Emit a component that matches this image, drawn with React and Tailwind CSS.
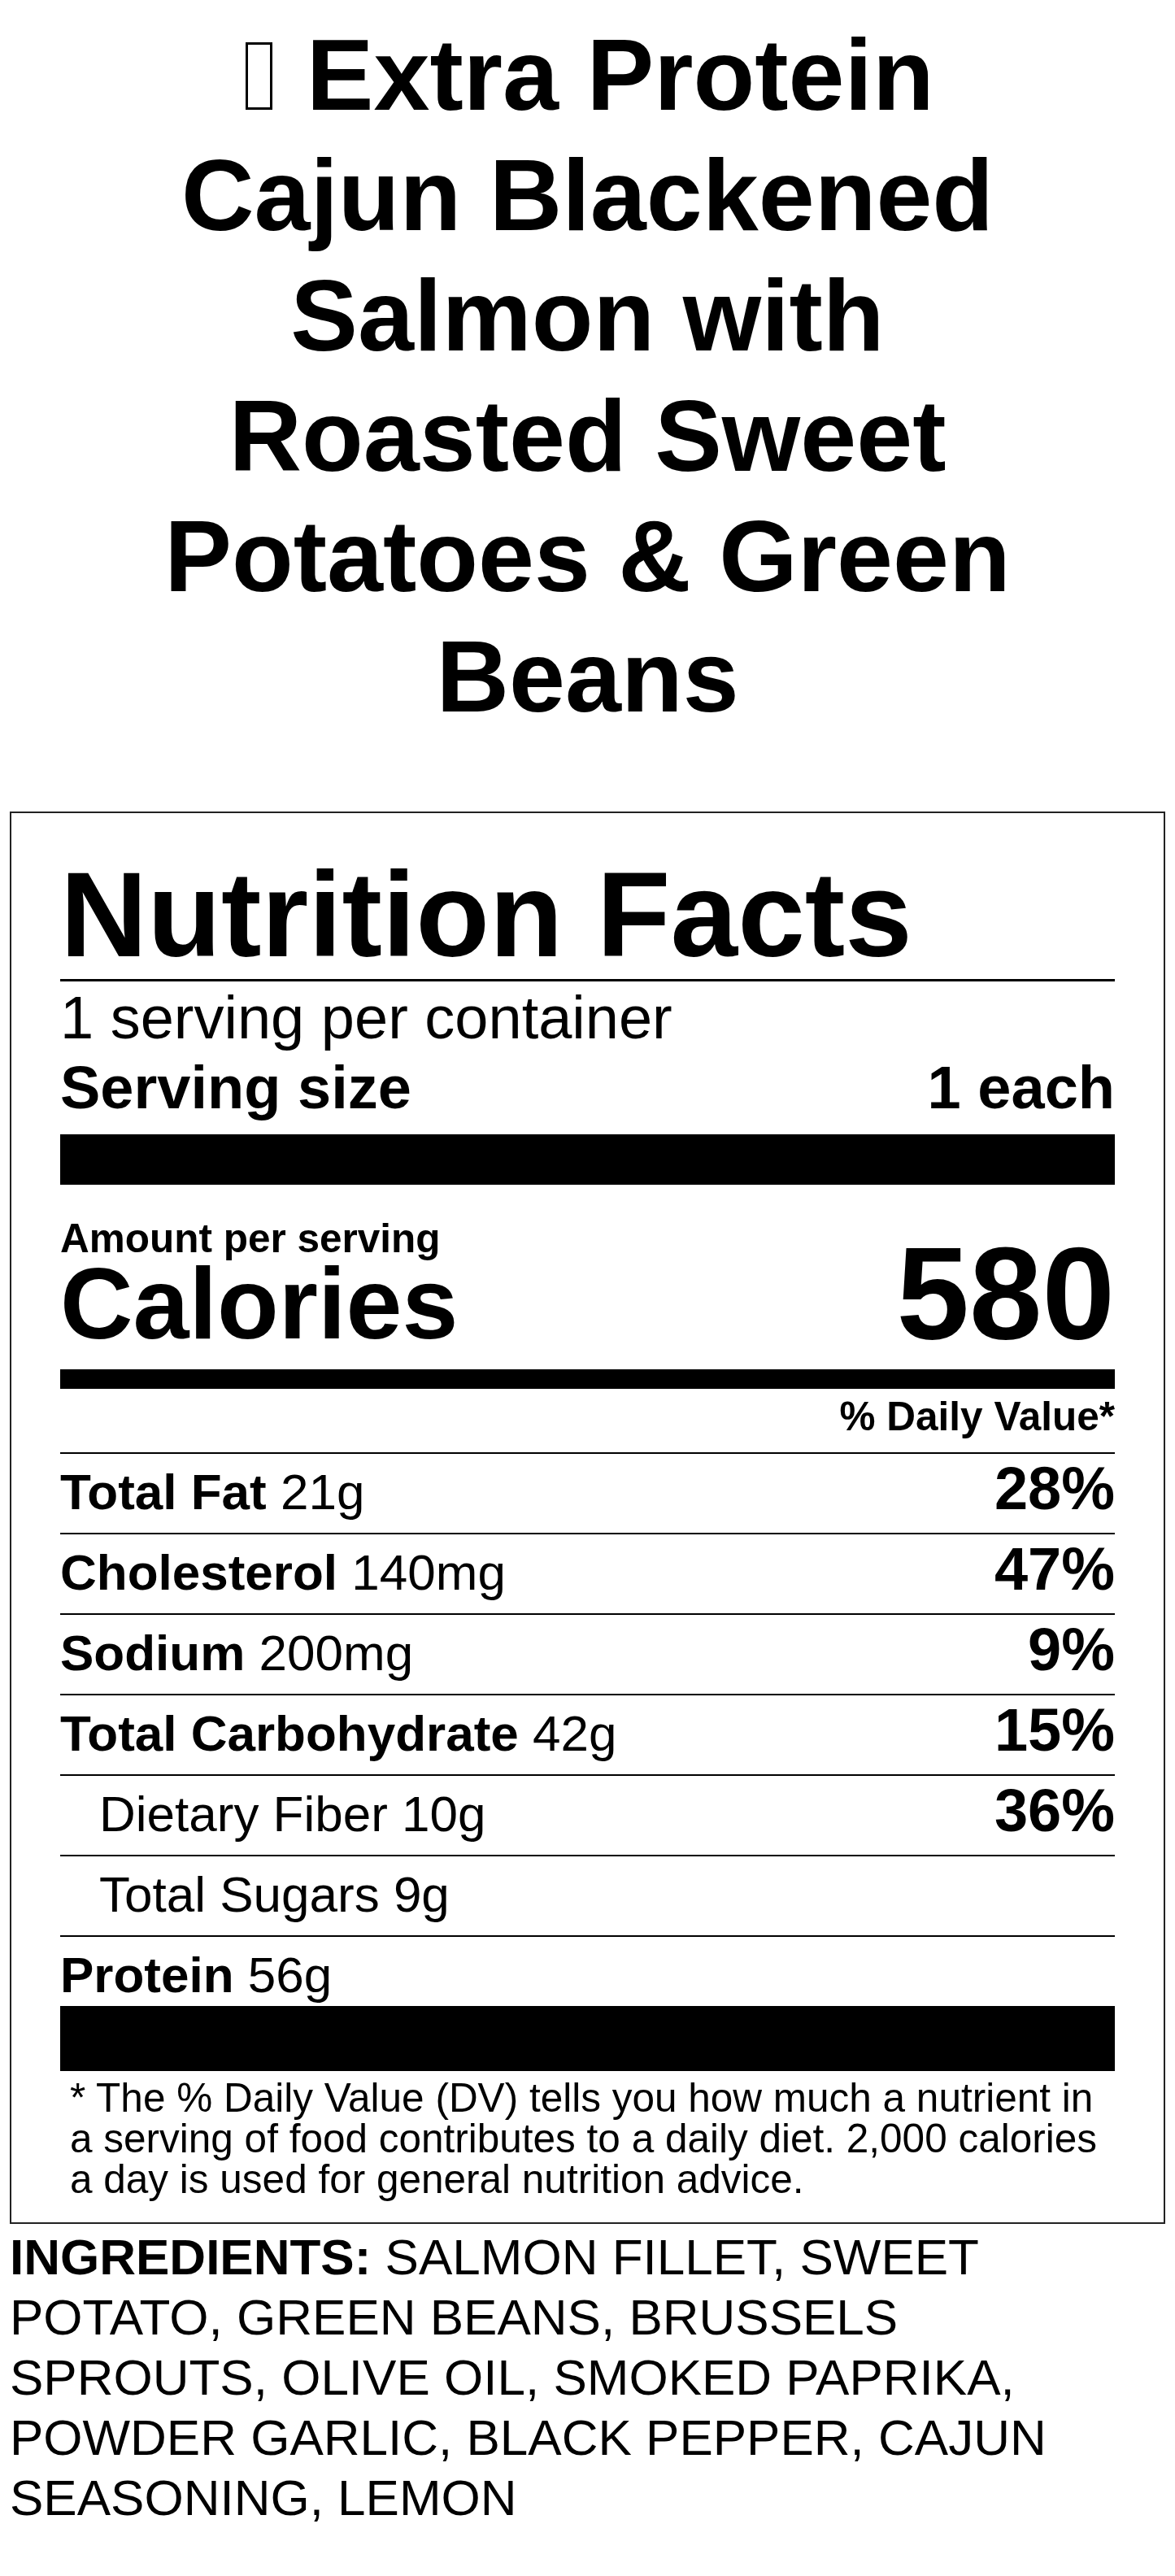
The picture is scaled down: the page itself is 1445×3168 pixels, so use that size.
import React from 'react';

const nutrients = [
    { label: 'Total Fat', amount: '21g', dv: '28%' },
    { label: 'Cholesterol', amount: '140mg', dv: '47%' },
    { label: 'Sodium', amount: '200mg', dv: '9%' },
    { label: 'Total Carbohydrate', amount: '42g', dv: '15%' },
    { label: 'Dietary Fiber', amount: '10g', dv: '36%', sub: true },
    { label: 'Total Sugars', amount: '9g', sub: true },
];

const NutrientRow = ({ item }) => (
    <div className="flex h-[99px] items-baseline justify-between border-t-2 border-black pt-[8px]">
        <span className={`text-[62px] leading-[77px] ${item.sub ? 'pl-[48px]' : ''}`}>
            {item.sub ? (
                <>{item.label} {item.amount}</>
            ) : (
                <>
                    <b>{item.label}</b> {item.amount}
                </>
            )}
        </span>
        {item.dv && <span className="text-[74px] font-bold leading-[69px]">{item.dv}</span>}
    </div>
);

const App = () => {
    return (
        <div className="min-h-screen bg-white px-3 pt-[18px] pb-12 text-black font-['Liberation_Sans',Arial,sans-serif]">
            <h1 className="mx-auto max-w-[1120px] text-center text-[124px] font-bold leading-[148px]">
                <span className="ml-[6px] mr-[7px] inline-block h-[83px] w-[33px] border-[3px] border-black align-baseline" />{' '}
                Extra Protein Cajun Blackened Salmon with Roasted Sweet Potatoes &amp; Green Beans
            </h1>

            <div className="mt-[92px] border-2 border-[#222] px-[60px] pt-[51px] pb-[28px]">
                <h2 className="border-b-[3px] border-black pb-[4px] text-[148.5px] font-bold leading-none">
                    Nutrition Facts
                </h2>
                <p className="mt-[2px] text-[74px] leading-[86px]">1 serving per container</p>
                <div className="flex justify-between text-[74px] font-bold leading-[86px]">
                    <span>Serving size</span>
                    <span>1 each</span>
                </div>
                <div className="mt-[14px] h-[62px] bg-black" />

                <div className="mt-[41px] flex items-end justify-between font-bold">
                    <div>
                        <p className="text-[49.5px] leading-none">Amount per serving</p>
                        <p className="text-[124px] leading-[112px]">Calories</p>
                    </div>
                    <span className="text-[161px] leading-[138px]">580</span>
                </div>
                <div className="mt-[25px] h-[24px] bg-black" />

                <p className="pt-[4px] pb-[15px] text-right text-[49.5px] font-bold leading-[1.2]">% Daily Value*</p>

                {nutrients.map((item) => (
                    <NutrientRow key={item.label} item={item} />
                ))}
                <div className="h-[87px] border-t-2 border-black pt-[8px] text-[62px] leading-[77px]">
                    <b>Protein</b> 56g
                </div>
                <div className="h-[80px] bg-black" />

                <p className="mt-[8px] pl-[12px] text-[49.5px] leading-[50px]">
                    * The % Daily Value (DV) tells you how much a nutrient in a serving of food contributes to a
                    daily diet. 2,000 calories a day is used for general nutrition advice.
                </p>
            </div>

            <p className="mt-[4px] pr-[76px] text-[62px] leading-[74px]">
                <b>INGREDIENTS:</b> SALMON FILLET, SWEET POTATO, GREEN BEANS, BRUSSELS SPROUTS, OLIVE OIL,
                SMOKED PAPRIKA, POWDER GARLIC, BLACK PEPPER, CAJUN SEASONING, LEMON
            </p>
        </div>
    );
};

export default App;
